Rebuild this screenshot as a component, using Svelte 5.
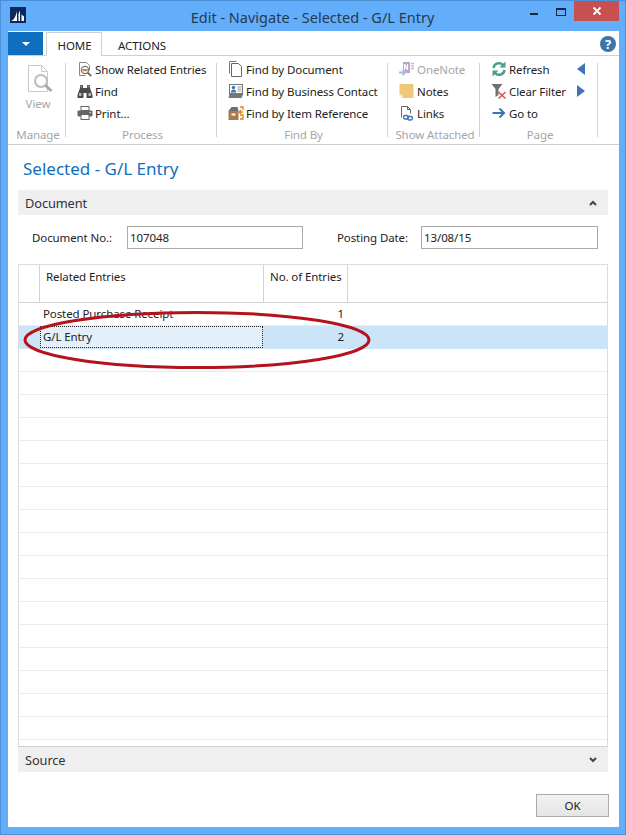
<script>
	const groups = [
		{
			label: 'Process',
			width: 151,
			items: [
				{ icon: 'related', text: 'Show Related Entries' },
				{ icon: 'binoculars', text: 'Find' },
				{ icon: 'printer', text: 'Print...' }
			]
		},
		{
			label: 'Find By',
			width: 171,
			items: [
				{ icon: 'pages', text: 'Find by Document' },
				{ icon: 'contact', text: 'Find by Business Contact' },
				{ icon: 'box', text: 'Find by Item Reference' }
			]
		},
		{
			label: 'Show Attached',
			width: 92,
			items: [
				{ icon: 'onenote', text: 'OneNote', disabled: true },
				{ icon: 'note', text: 'Notes' },
				{ icon: 'link', text: 'Links' }
			]
		}
	];
	const pageItems = [
		{ icon: 'refresh', text: 'Refresh' },
		{ icon: 'clear', text: 'Clear Filter' },
		{ icon: 'goto', text: 'Go to' }
	];
	const blankRows = 17;
</script>

{#snippet icon(name)}
	<svg class="icon" viewBox="0 0 16 16" width="16" height="16">
		{#if name == 'related'}
			<path d="M2.500 1.500h7l3 3v5M2.500 1.500v13h6" fill="#fff" stroke="#8a8a8a" />
			<circle cx="8" cy="9" r="3.600" fill="#fff" stroke="#777" stroke-width="1.300" />
			<rect x="5.500" y="8" width="5" height="2.200" fill="#d9822b" />
			<path d="M10.600 11.600l3.600 3.400" stroke="#666" stroke-width="1.800" />
		{:else if name == 'binoculars'}
			<path d="M3 2h3v3h4v-3h3v3l2.500 7v3h-6v-5h-3v5h-6v-3l2.500-7z" fill="#4a4a4a" />
			<rect x="3.500" y="2.500" width="2" height="2" fill="#8c8c8c" />
			<rect x="10.500" y="2.500" width="2" height="2" fill="#8c8c8c" />
			<rect x="2" y="10" width="2.500" height="3" fill="#b5b5b5" />
			<rect x="11.500" y="10" width="2.500" height="3" fill="#b5b5b5" />
		{:else if name == 'printer'}
			<rect x="4" y="1.500" width="8" height="4" fill="#fff" stroke="#666" />
			<rect x="0.500" y="5.500" width="15" height="6" rx="1" fill="#666" />
			<rect x="4" y="9.500" width="8" height="5" fill="#fff" stroke="#666" />
			<rect x="12.500" y="7" width="1.500" height="1.200" fill="#ddd" />
		{:else if name == 'pages'}
			<path d="M1.500 12.500v-12h7" fill="none" stroke="#777" />
			<path d="M3.500 2.500h7l3 3v10h-10z" fill="#fff" stroke="#666" />
		{:else if name == 'contact'}
			<rect x="1.500" y="1.500" width="13" height="9" fill="#fff" stroke="#777" />
			<circle cx="5.500" cy="4.500" r="1.700" fill="#3f74b5" />
			<path d="M2.800 9.500c0-4 5.400-4 5.400 0z" fill="#3f74b5" />
			<path d="M9.500 4h4M9.500 6h4M9.500 8h4" stroke="#999" />
			<path d="M1.500 10.500h14l-2 4.500h-13z" fill="#777" />
		{:else if name == 'box'}
			<path d="M0.500 6l3-4h6l1 4z" fill="#6e6e6e" />
			<rect x="0.500" y="6" width="10" height="9" fill="#a97a4c" />
			<rect x="3.500" y="8.500" width="4" height="2" fill="#fff" />
			<path d="M12 2h3v3M15 7h-3M12 10h3v4h-3" fill="none" stroke="#d9822b" stroke-width="1.300" />
			<path d="M13 5l-2 2 2 2" fill="none" stroke="#d9822b" stroke-width="1.300" />
		{:else if name == 'onenote'}
			<rect x="4" y="1" width="7" height="11" fill="#b9a3c6" />
			<path d="M5.500 9v-6l3 6v-6" fill="none" stroke="#fff" stroke-width="1.200" />
			<path d="M12 2.500h3M12 5h3M12 7.500h3" stroke="#c6b5d0" stroke-width="1.300" />
			<path d="M0 11.500h5M3.500 9l3 2.500-3 2.500" fill="none" stroke="#a9bdd4" stroke-width="1.800" />
		{:else if name == 'note'}
			<path d="M0.500 1h14v14h-10.500l-3.500-3.500z" fill="#f0c878" />
			<path d="M0.500 11.500h3.500v3.500z" fill="#fbe6bd" />
		{:else if name == 'link'}
			<path d="M2.500 12.500v-11h6l3 3v4" fill="#fff" stroke="#666" />
			<path d="M8.500 1.500v3h3" fill="none" stroke="#666" />
			<rect x="4.500" y="10.500" width="5" height="3.500" rx="1.700" fill="none" stroke="#3f74b5" stroke-width="1.300" />
			<rect x="8.500" y="11.500" width="5" height="3.500" rx="1.700" fill="none" stroke="#3f74b5" stroke-width="1.300" />
		{:else if name == 'refresh'}
			<path d="M2.500 7a5.500 5.500 0 0 1 9.500-3" fill="none" stroke="#4a9c8c" stroke-width="2.400" />
			<path d="M14.500 0.500v6h-6z" fill="#4a9c8c" />
			<path d="M13.500 9a5.500 5.500 0 0 1-9.500 3" fill="none" stroke="#4a9c8c" stroke-width="2.400" />
			<path d="M1.500 15.500v-6h6z" fill="#4a9c8c" />
		{:else if name == 'clear'}
			<path d="M0.500 1h11l-4 5v6l-3 2v-8z" fill="#707070" />
			<path d="M7.500 9l7 6.500M14.500 9l-7 6.500" stroke="#d9534f" stroke-width="1.500" />
		{:else if name == 'goto'}
			<path d="M1.500 8h11M8.500 3.500l4.500 4.500-4.500 4.500" fill="none" stroke="#3f74b5" stroke-width="2" />
		{/if}
	</svg>
{/snippet}

{#snippet item(entry)}
	<div class="item" class:disabled={entry.disabled}>
		{@render icon(entry.icon)}
		<span>{entry.text}</span>
	</div>
{/snippet}

<div class="window">
	<header class="titlebar">
		<svg class="logo" viewBox="0 0 16 16" width="16" height="16">
			<rect width="16" height="16" fill="#0b2a5b" />
			<path d="M1 14c3-1 5-5 6-10v10zM8.500 14v-7l1.500-3.500v10.500zM11.500 14v-6.500l2.500 2v4.500z" fill="#fff" />
		</svg>
		<h1>Edit - Navigate - Selected - G/L Entry</h1>
		<div class="controls">
			<span class="minimize"></span>
			<span class="maximize"></span>
			<span class="close">
				<svg viewBox="0 0 10 10" width="10" height="10">
					<path d="M1.500 1.500l7 7M8.500 1.500l-7 7" stroke="#fff" stroke-width="1.800" />
				</svg>
			</span>
		</div>
	</header>

	<div class="client">
		<nav class="tabs">
			<button class="menu-button" aria-label="Menu"><span class="caret"></span></button>
			<div class="tab active">HOME</div>
			<div class="tab">ACTIONS</div>
			<svg class="help" viewBox="0 0 16 16" width="16" height="16">
				<circle cx="8" cy="8" r="8" fill="#3d75a8" />
				<text x="8" y="12.500" text-anchor="middle">?</text>
			</svg>
		</nav>

		<section class="ribbon">
			<div class="group manage">
				<div class="large disabled">
					<svg viewBox="0 0 28 30" width="28" height="30">
						<path d="M1.500 1.500h13l6 6v20h-19z" fill="#fff" stroke="#c9c9c9" />
						<path d="M14.500 1.500v6h6" fill="none" stroke="#c9c9c9" />
						<circle cx="14" cy="17" r="6" fill="#fff" stroke="#bdbdbd" stroke-width="2" />
						<path d="M18.500 21.500l6 5.500" stroke="#aaa" stroke-width="3" />
					</svg>
					<span>View</span>
				</div>
				<div class="group-label">Manage</div>
			</div>
			{#each groups as group}
				<div class="group" style="width: {group.width}px">
					<div class="items">
						{#each group.items as entry}
							{@render item(entry)}
						{/each}
					</div>
					<div class="group-label">{group.label}</div>
				</div>
			{/each}
			<div class="group page">
				<div class="page-body">
					<div class="items">
						{#each pageItems as entry}
							{@render item(entry)}
						{/each}
					</div>
					<div class="arrows">
						<span class="arrow left"></span>
						<span class="arrow right"></span>
					</div>
				</div>
				<div class="group-label">Page</div>
			</div>
		</section>

		<main class="content">
			<h2>Selected - G/L Entry</h2>

			<div class="fasttab">
				<span>Document</span>
				<svg viewBox="0 0 8 6" width="8" height="6"><path d="M1 5l3-3 3 3" fill="none" stroke="#444" stroke-width="2" /></svg>
			</div>

			<div class="fields">
				<label class="doc-label" for="doc-no">Document No.:</label>
				<input id="doc-no" class="doc-input" value="107048" readonly />
				<label class="date-label" for="post-date">Posting Date:</label>
				<input id="post-date" class="date-input" value="13/08/15" readonly />
			</div>

			<div class="grid">
				<div class="row head">
					<div class="stub"></div>
					<div class="col-name">Related Entries</div>
					<div class="col-count">No. of Entries</div>
				</div>
				<div class="row">
					<div class="stub"></div>
					<div class="col-name">Posted Purchase Receipt</div>
					<div class="col-count">1</div>
				</div>
				<div class="row selected">
					<div class="stub"></div>
					<div class="col-name">G/L Entry</div>
					<div class="col-count">2</div>
				</div>
				{#each { length: blankRows } as _}
					<div class="row blank"></div>
				{/each}

				<svg class="circle" viewBox="0 0 352 62" width="352" height="62">
					<ellipse cx="176" cy="31" rx="172" ry="27.500" fill="none" stroke="#b5121b" stroke-width="3" />
				</svg>
			</div>

			<div class="fasttab source">
				<span>Source</span>
				<svg viewBox="0 0 8 6" width="8" height="6"><path d="M1 1l3 3 3-3" fill="none" stroke="#444" stroke-width="2" /></svg>
			</div>

			<div class="actions">
				<button class="ok">OK</button>
			</div>
		</main>
	</div>
</div>

<style>
	:global(body) {
		margin: 0;
	}
	.window {
		width: 626px;
		height: 835px;
		box-sizing: border-box;
		display: flex;
		flex-direction: column;
		background: #63aefb;
		border: 1px solid #4b90d6;
		padding: 0 6px 7px 7px;
		font-family: 'Noto Sans', sans-serif;
		font-size: 11.5px;
		letter-spacing: -0.1px;
		color: #222;
	}
	.titlebar {
		height: 30px;
		flex: none;
		position: relative;
		display: flex;
		align-items: flex-start;
		justify-content: center;
	}
	.logo {
		position: absolute;
		left: 2px;
		top: 6px;
	}
	h1 {
		margin: 6px 0 0 -2px;
		font-size: 14.5px;
		font-weight: 400;
		line-height: 20px;
		letter-spacing: 0;
		color: #253a4e;
	}
	.controls {
		position: absolute;
		right: 0;
		top: 0;
		display: flex;
	}
	.minimize {
		position: absolute;
		right: 81px;
		top: 12px;
		width: 8px;
		height: 2px;
		background: #1b2a38;
	}
	.maximize {
		position: absolute;
		right: 53px;
		top: 7px;
		width: 8px;
		height: 5px;
		border: 1px solid #1b2a38;
		border-top-width: 2px;
	}
	.close {
		width: 45px;
		height: 20px;
		background: #c75050;
		display: flex;
		align-items: center;
		justify-content: center;
	}
	.client {
		flex: 1;
		background: #fff;
		display: flex;
		flex-direction: column;
		min-height: 0;
	}
	.tabs {
		height: 24px;
		flex: none;
		display: flex;
		align-items: flex-end;
		position: relative;
		padding-top: 1px;
		box-sizing: border-box;
	}
	.menu-button {
		width: 35px;
		height: 23px;
		border: none;
		padding: 0;
		background: #106ebe;
		display: flex;
		align-items: center;
		justify-content: center;
	}
	.caret {
		border-left: 4px solid transparent;
		border-right: 4px solid transparent;
		border-top: 4px solid #fff;
	}
	.tab {
		height: 23px;
		box-sizing: border-box;
		line-height: 26px;
		padding: 0 11px;
		margin-left: 3px;
		border: 1px solid transparent;
		border-bottom: none;
		color: #222;
	}
	.tab.active {
		width: 56px;
		padding: 0 0 0 1px;
		text-align: center;
		border-color: #d0d0d0;
		background: #fff;
		position: relative;
		z-index: 1;
		margin-bottom: -1px;
		height: 24px;
	}
	.tab:not(.active) {
		margin-left: 4px;
	}
	.help {
		position: absolute;
		right: 3px;
		top: 5px;
	}
	.help text {
		font-family: 'Noto Sans', sans-serif;
		font-weight: 700;
		font-size: 13px;
		fill: #fff;
	}
	.ribbon {
		height: 90px;
		flex: none;
		box-sizing: border-box;
		display: flex;
		border-top: 1px solid #d0d0d0;
		border-bottom: 1px solid #d0d0d0;
	}
	.group {
		position: relative;
		display: flex;
		flex-direction: column;
		justify-content: space-between;
		height: 88px;
		padding-top: 2px;
		box-sizing: border-box;
	}
	.group::after {
		content: '';
		position: absolute;
		right: 0;
		top: 7px;
		bottom: 7px;
		width: 1px;
		background: #d4d4d4;
	}
	.manage {
		width: 58px;
	}
	.page {
		width: 118px;
	}
	.large {
		display: flex;
		flex-direction: column;
		align-items: center;
		padding-top: 6px;
		gap: 2px;
		margin-left: 2px;
	}
	.large svg {
		margin-left: 5px;
	}
	.disabled {
		color: #a6a6a6;
	}
	.items {
		display: flex;
		flex-direction: column;
		padding-left: 11px;
	}
	.item {
		height: 22px;
		display: flex;
		align-items: center;
		gap: 2px;
		white-space: nowrap;
	}
	.icon {
		flex: none;
	}
	.group-label {
		height: 18px;
		line-height: 18px;
		padding-left: 2px;
		text-align: center;
		color: #a6a6a6;
	}
	.page-body {
		display: flex;
	}
	.arrows {
		display: flex;
		flex-direction: column;
		margin-left: 11px;
		padding-top: 5px;
		gap: 10px;
	}
	.arrow {
		width: 0;
		height: 0;
		border-top: 6px solid transparent;
		border-bottom: 6px solid transparent;
	}
	.arrow.left {
		border-right: 8px solid #3f74b5;
	}
	.arrow.right {
		border-left: 8px solid #3f74b5;
	}
	.content {
		flex: 1;
		display: flex;
		flex-direction: column;
		padding: 0 11px 0 10px;
		min-height: 0;
	}
	h2 {
		margin: 11px 0 0 5px;
		height: 34px;
		line-height: 25px;
		font-size: 17px;
		font-weight: 400;
		letter-spacing: 0;
		color: #106ebe;
	}
	.fasttab {
		height: 25px;
		flex: none;
		background: #efefef;
		display: flex;
		align-items: center;
		justify-content: space-between;
		padding: 0 11px 0 7px;
		font-size: 12.8px;
		color: #333;
	}
	.fields {
		height: 49px;
		flex: none;
		display: flex;
		align-items: flex-start;
		padding-top: 11px;
		box-sizing: border-box;
	}
	.fields label {
		line-height: 23px;
	}
	.doc-label {
		margin-left: 14px;
		width: 95px;
	}
	.date-label {
		margin-left: 34px;
		width: 84px;
	}
	input {
		height: 23px;
		box-sizing: border-box;
		border: 1px solid #a9a9a9;
		padding: 0 2px;
		font: inherit;
		letter-spacing: inherit;
		color: #222;
		outline: none;
	}
	.doc-input {
		width: 176px;
	}
	.date-input {
		width: 177px;
	}
	.grid {
		position: relative;
		height: 483px;
		flex: none;
		box-sizing: border-box;
		border: 1px solid #dcdcdc;
		border-bottom-color: #cfcfcf;
		overflow: hidden;
	}
	.row {
		height: 23px;
		box-sizing: border-box;
		display: flex;
		border-bottom: 1px solid #ececec;
		line-height: 21px;
	}
	.row.head {
		height: 38px;
		border-bottom: 1px solid #d4d4d4;
		line-height: 24px;
	}
	.stub {
		width: 20px;
		flex: none;
		box-sizing: border-box;
	}
	.col-name {
		width: 224px;
		flex: none;
		box-sizing: border-box;
		padding-left: 4px;
	}
	.col-count {
		width: 84px;
		flex: none;
		box-sizing: border-box;
		padding-right: 3px;
		text-align: right;
		white-space: nowrap;
	}
	.head .stub,
	.head .col-name,
	.head .col-count {
		border-right: 1px solid #d4d4d4;
	}
	.head .stub {
		width: 21px;
	}
	.head .col-name {
		width: 224px;
		padding-left: 6px;
	}
	.head .col-count {
		text-align: left;
		padding-left: 6px;
	}
	.selected {
		background: #cce4f7;
		border-bottom-color: #cce4f7;
	}
	.selected .col-name {
		margin-left: 1px;
		padding-left: 3px;
		width: 223px;
		background: #e3f0fa;
		outline: 1px dotted #222;
		outline-offset: -1px;
	}
	.circle {
		position: absolute;
		left: 2px;
		top: 44px;
	}
	.actions {
		display: flex;
		justify-content: flex-end;
		padding-top: 22px;
		margin-right: -1px;
	}
	.ok {
		width: 73px;
		height: 23px;
		border: 1px solid #a9a9a9;
		background: linear-gradient(#f2f2f2, #e5e5e5);
		font: inherit;
		letter-spacing: inherit;
		color: #222;
		padding: 0;
	}
</style>
